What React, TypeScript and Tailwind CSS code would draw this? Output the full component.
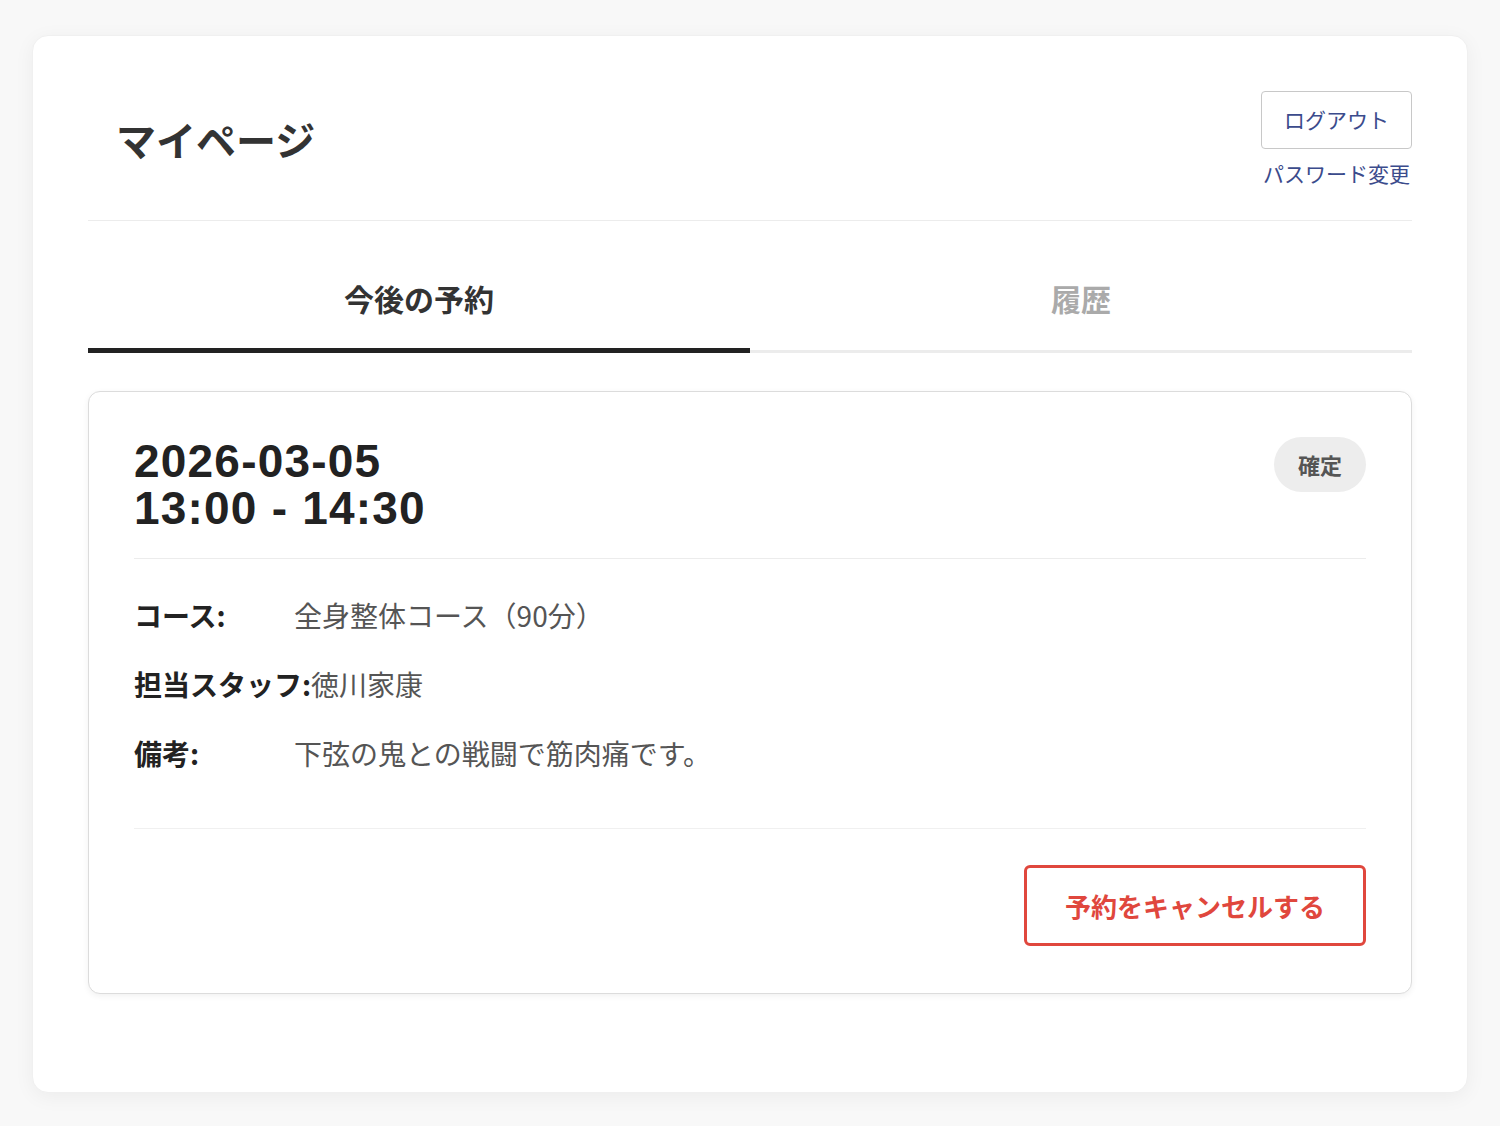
import { useState } from 'react';

const JP = "font-['Noto_Sans_CJK_JP',sans-serif]";

type Reservation = {
  date: string;
  time: string;
  status: string;
  course: string;
  staff: string;
  note: string;
};

const UPCOMING: Reservation[] = [
  {
    date: '2026-03-05',
    time: '13:00 - 14:30',
    status: '確定',
    course: '全身整体コース（90分）',
    staff: '徳川家康',
    note: '下弦の鬼との戦闘で筋肉痛です。',
  },
];

function InfoRow({ label, value }: { label: string; value: string }) {
  return (
    <div className="flex items-center text-[28px] leading-[42px]">
      <span className="min-w-[160px] font-bold text-[#222]">{label}</span>
      <span className="text-[#555]">{value}</span>
    </div>
  );
}

function ReservationCard({ r }: { r: Reservation }) {
  return (
    <div className="mt-[38px] rounded-[12px] border border-[#dcdcdc] bg-white px-[45px] pt-[46px] pb-[47px] shadow-[0_2px_6px_rgba(0,0,0,0.06)]">
      {/* date + status */}
      <div className="flex items-start justify-between border-b border-[#ececec] pb-[26px]">
        <div className="font-['Liberation_Sans',sans-serif] text-[46px] font-bold leading-[47px] tracking-[1.2px] text-[#222]">
          <div>{r.date}</div>
          <div>{r.time}</div>
        </div>
        <span className="-mt-[1px] rounded-full bg-[#ededed] px-[24px] py-[11px] text-[22px] font-bold leading-[33px] text-[#555]">
          {r.status}
        </span>
      </div>

      {/* details */}
      <div className="flex flex-col gap-[27px] border-b border-[#f0f0f0] pt-[35px] pb-[54px]">
        <InfoRow label="コース:" value={r.course} />
        <InfoRow label="担当スタッフ:" value={r.staff} />
        <InfoRow label="備考:" value={r.note} />
      </div>

      <div className="flex justify-end pt-[36px]">
        <button className="h-[81px] rounded-[6px] border-[3px] border-[#e0473d] bg-white px-[38px] text-[26px] font-bold text-[#e0473d]">
          予約をキャンセルする
        </button>
      </div>
    </div>
  );
}

export default function App() {
  const [tab, setTab] = useState<'upcoming' | 'history'>('upcoming');

  return (
    <div className={`min-h-screen bg-[#f8f8f8] px-[32px] pt-[35px] pb-[33px] ${JP}`}>
      <div className="rounded-[16px] border border-[#f0f0f0] bg-white px-[55px] pt-[55px] pb-[98px] shadow-[0_4px_20px_rgba(0,0,0,0.05)]">
        {/* header */}
        <div className="flex items-start justify-between border-b border-[#ececec] pb-[32px]">
          <h1 className="mt-[22px] pl-[28px] text-[40px] font-bold leading-[52px] text-[#333]">マイページ</h1>
          <div className="flex flex-col items-end">
            <button className="h-[58px] rounded-[4px] border border-[#c8c8c8] bg-white px-[22px] text-[21px] text-[#3b4b8c]">
              ログアウト
            </button>
            <a className="mt-[9px] mr-[2px] text-[21px] leading-[30px] text-[#3b4b8c]">パスワード変更</a>
          </div>
        </div>

        {/* tabs */}
        <div className="flex">
          <button
            onClick={() => setTab('upcoming')}
            className={`flex-1 pt-[55px] text-[30px] font-bold leading-[45px] ${
              tab === 'upcoming'
                ? 'border-b-[5px] border-[#222] pb-[27px] text-[#333]'
                : 'border-b-[3px] border-[#ececec] pb-[29px] text-[#aaa]'
            }`}
          >
            今後の予約
          </button>
          <button
            onClick={() => setTab('history')}
            className={`flex-1 pt-[55px] text-[30px] font-bold leading-[45px] ${
              tab === 'history'
                ? 'border-b-[5px] border-[#222] pb-[27px] text-[#333]'
                : 'border-b-[3px] border-[#ececec] pb-[29px] text-[#aaa]'
            }`}
          >
            履歴
          </button>
        </div>

        {tab === 'upcoming' ? (
          UPCOMING.map((r) => <ReservationCard key={r.date + r.time} r={r} />)
        ) : (
          <div className="mt-[38px] text-center text-[22px] text-[#999]">履歴はありません</div>
        )}
      </div>
    </div>
  );
}
